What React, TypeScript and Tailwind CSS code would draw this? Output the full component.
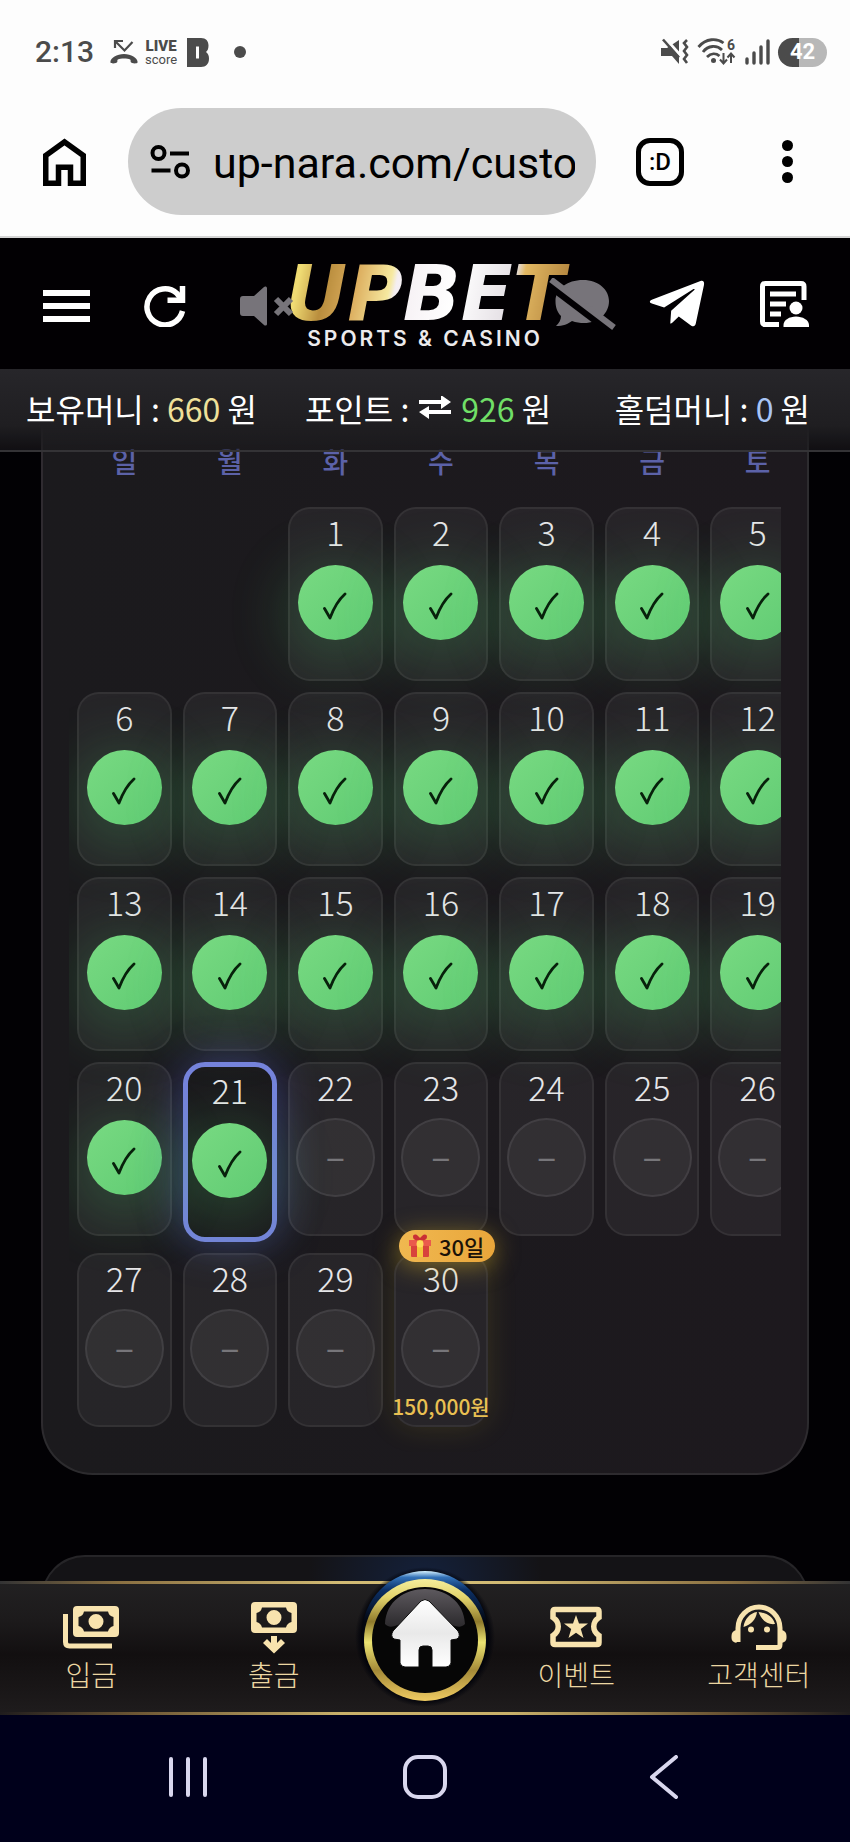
import React from 'react';
import { FaTelegramPlane } from 'react-icons/fa';

const WEEKDAYS = ['일', '월', '화', '수', '목', '금', '토'];
const DAYS = Array.from({ length: 30 }, (_, i) => i + 1);
const TODAY = 21;
const FIRST_DAY_OFFSET = 2;

const REWARDS: Record<number, { label: string; amount: string }> = {
  30: { label: '30일', amount: '150,000원' },
};

const StatusBar: React.FC = () => (
  <div className="h-[108px] flex items-center justify-between pl-[35px] pr-[23px] pb-1 text-[#4b4b4b] font-['Roboto',sans-serif]">
    <div className="flex items-center">
      <span className="text-[30px] leading-8 font-medium">2:13</span>
      <svg className="ml-4 w-7 h-7" viewBox="0 0 28 28" fill="none" stroke="currentColor" strokeWidth="2.2">
        <path d="M5 10V3h8M5.500 3.500l9 9L22.500 4" />
        <path d="M0.500 24.500c-.8-4 6-8.500 13.500-8.500s14.300 4.500 13.500 8.500c-.3 1.500-6.500 1-6.800-.5-.2-1 .2-2-.6-2.500-2.500-1.200-9.700-1.200-12.200 0-.8.500-.4 1.500-.6 2.500-.3 1.500-6.500 2-6.800.5z" fill="currentColor" stroke="none" />
      </svg>
      <span className="ml-[7px] w-8 flex flex-col items-center">
        <span className="text-[15px] leading-4 font-black">LIVE</span>
        <span className="text-[13px] leading-3">score</span>
      </span>
      <svg className="ml-[10px] w-[22px] h-[29px]" viewBox="0 0 22 29" fill="currentColor">
        <path fillRule="evenodd" d="M0 0h14c5 0 7.500 3 7.500 7.500 0 3-.8 5.200-2.500 6.500 2 1.300 3 3.600 3 6.500 0 5.500-3 8.500-8 8.500H0zM9 8.500v12h3v-12z" />
      </svg>
      <span className="ml-[25px] w-3 h-3 rounded-full bg-current" />
    </div>
    <div className="flex items-center gap-2">
      <svg className="w-7 h-7" viewBox="0 0 28 28" fill="currentColor">
        <path d="M0 10h6l12-8v24l-7-8H0z" />
        <path d="M4 0l16 18" stroke="#fdfdfd" strokeWidth="3" />
        <path d="M2 1.500l16 18" stroke="currentColor" strokeWidth="2.600" />
        <path d="M26 2l-3 3 3 4-3 4 3 4-3 4 3 4" fill="none" stroke="currentColor" strokeWidth="2.600" />
      </svg>
      <svg className="w-10 h-7" viewBox="0 0 40 28" fill="none" stroke="currentColor" strokeWidth="2.800">
        <path d="M1.500 9C9 0 20 0 26.500 5M6 14C11 7 20 7 25 12M10 19c4-4 9-4 12.500-1" />
        <circle cx="16.500" cy="22.500" r="2.500" fill="currentColor" stroke="none" />
        <path d="M26.500 15v10M23 21.500l3.500 4 3.500-4M34 25V16M30.500 19.500l3.500-4 3.500 4" strokeWidth="2" />
        <text x="30" y="12" fontSize="14" fontWeight="700" fill="currentColor" stroke="none">6</text>
      </svg>
      <svg className="w-[25px] h-7" viewBox="0 0 25 28" stroke="currentColor" strokeWidth="3.400" strokeLinecap="round">
        <path d="M2 25v-4M9 25V15M16 25V9M23 25V3" />
      </svg>
      <span className="w-[49px] h-[29px] rounded-full bg-linear-to-r from-[#4b4b4b] from-43% to-[#b8b8b8] to-43% flex items-center justify-center text-[22px] leading-none font-bold text-white">
        42
      </span>
    </div>
  </div>
);

const BrowserBar: React.FC = () => (
  <div className="h-[130px] flex items-start pl-[43px] pr-[57px] border-b-2 border-[#d5d5d5]">
    <button aria-label="홈" className="h-[107px] flex items-center">
      <svg className="w-[43px] h-[48px]" viewBox="0 0 43 48" fill="none" stroke="#000" strokeWidth="5.500">
        <path d="M2.750 17.500L21.500 4l18.750 13.500v27.750H27.500v-16h-12v16H2.750z" />
      </svg>
    </button>
    <div className="ml-[42px] flex-1 min-w-0 h-[107px] rounded-full bg-[#cdcdcd] flex items-center pl-[22px] pr-[21px]">
      <svg className="w-[41px] h-[34px] shrink-0" viewBox="0 0 41 34" fill="none" stroke="#000" strokeWidth="4">
        <circle cx="8.500" cy="8" r="6" />
        <circle cx="32" cy="25.500" r="6" />
        <path d="M20 8.500h19M1.500 25.500h19" />
      </svg>
      <input
        aria-label="주소"
        readOnly
        value="up-nara.com/custo"
        className="ml-[22px] pt-0.5 flex-1 min-w-0 bg-transparent text-[43px] leading-[52px] text-black outline-none font-['Roboto',sans-serif]"
      />
    </div>
    <button aria-label="탭" className="ml-10 h-[107px] flex items-center">
      <span className="w-12 h-12 rounded-[14px] border-[5px] border-black flex items-center justify-center text-[24px] leading-none font-medium font-['Roboto',sans-serif]">
        :D
      </span>
    </button>
    <button aria-label="메뉴" className="ml-[98px] h-[107px] flex flex-col justify-center gap-[5px]">
      <span className="w-[11px] h-[11px] rounded-full bg-black" />
      <span className="w-[11px] h-[11px] rounded-full bg-black" />
      <span className="w-[11px] h-[11px] rounded-full bg-black" />
    </button>
  </div>
);

const Logo: React.FC = () => (
  <a href="#" className="absolute left-1/2 top-[25px] -translate-x-1/2 flex flex-col items-center">
    <span className="px-2 text-[76px] leading-[62px] font-bold italic font-['DejaVu_Sans',sans-serif] text-transparent bg-clip-text bg-[linear-gradient(102deg,#e9d35c_0%,#f0dc74_8%,#b98d3d_17%,#dcae5f_27%,#f6e9a0_38%,#f4eef2_40%,#ffffff_60%,#e4dfe4_78%,#e2b862_81%,#a87836_100%)]">
      UPBET
    </span>
    <span className="mt-0.5 text-[21px] leading-6 font-semibold tracking-[3px] text-[#eceaec] whitespace-nowrap font-['Inter',sans-serif]">
      SPORTS &amp; CASINO
    </span>
  </a>
);

const SiteHeader: React.FC = () => (
  <header className="relative h-[131px] bg-[#020003] flex items-center justify-between pl-[43px] pr-[41px] text-white">
    <Logo />
    <div className="relative flex items-center gap-[54px] pt-1">
      <button aria-label="메뉴 열기">
        <svg className="w-[47px] h-[32px]" viewBox="0 0 47 32" fill="currentColor">
          <path d="M0 0h47v6H0zM0 13h47v6H0zM0 26h47v6H0z" />
        </svg>
      </button>
      <button aria-label="새로고침">
        <svg className="w-[42px] h-[42px]" viewBox="0 0 42 42" fill="none" stroke="currentColor" strokeWidth="5.500">
          <path d="M38.500 26A18 18 0 1 1 33 8.500l5 6.500" />
          <path d="M38.500 1v14.200H23.500" />
        </svg>
      </button>
      <button aria-label="소리 끄기" className="text-[#77747a]">
        <svg className="w-[54px] h-[40px]" viewBox="0 0 54 40" fill="currentColor">
          <path d="M3 10h11L24 1c1-1 3-.6 3 1v36c0 1.600-2 2-3 1l-10-9H3c-2 0-3-1-3-3V13c0-2 1-3 3-3z" />
          <path d="M36 13l15 15M51 13L36 28" stroke="currentColor" strokeWidth="6" />
        </svg>
      </button>
    </div>
    <div className="relative flex items-center gap-[30px]">
      <button aria-label="채팅 끄기" className="text-[#77747a]">
        <svg className="w-[67px] h-[52px]" viewBox="0 0 67 52" fill="currentColor">
          <path d="M34 2C50 2 60 12 60 23c0 12-10 22-25 22-4 0-8-.5-12-2-4 3-9 5-16 5 3-3 5-6 5-10-4-4-5.500-9-5.500-15C6.500 11 18 2 34 2z" />
          <path d="M0 6l62 47" stroke="#020003" strokeWidth="9" />
          <path d="M2 1.500l63 48" stroke="currentColor" strokeWidth="6" />
        </svg>
      </button>
      <button aria-label="텔레그램" className="mr-[22px]">
        <FaTelegramPlane className="w-[62px] h-[62px]" />
      </button>
      <button aria-label="게시판">
        <svg className="w-[49px] h-[46px]" viewBox="0 0 49 46" fill="none" stroke="currentColor" strokeWidth="5">
          <path d="M44 19V5.500q0-3-3-3H5.500q-3 0-3 3v35q0 3 3 3H19" />
          <path d="M10 13h26M10 23h16M10 33h11" />
          <circle cx="36" cy="27" r="6.500" fill="currentColor" stroke="none" />
          <path d="M23.500 46v-2c0-5 6-8.500 12.500-8.500S49 39 49 44v2z" fill="currentColor" stroke="none" />
        </svg>
      </button>
    </div>
  </header>
);

const BalanceBar: React.FC = () => (
  <div className="relative z-10 h-[83px] flex items-center pl-[26px] pr-[40px] pb-1 text-[32px] leading-10 text-white whitespace-nowrap border-b-2 border-[#38373a]/80 bg-linear-to-b from-[#27262a] via-[#1f1e21] via-70% to-[#1a191c]/60">
    <span>보유머니 : <span className="text-[#efe09a]">660</span> 원</span>
    <span className="ml-12 flex items-center gap-2.5">
      포인트 :
      <svg className="w-8 h-6" viewBox="0 0 32 24" fill="currentColor">
        <path d="M0 4h22V-1l10 7-10 7V8H0zM32 14v4H10v5L0 16l10-6v4z" />
      </svg>
      <span><span className="text-[#70df67]">926</span> 원</span>
    </span>
    <span className="ml-auto">홀덤머니 : <span className="text-[#a8c4f5]">0</span> 원</span>
  </div>
);

const GiftIcon: React.FC = () => (
  <svg className="w-[22px] h-[24px]" viewBox="0 0 22 24">
    <path d="M2 9h18v13q0 1-1 1H3q-1 0-1-1z" fill="#d8433c" />
    <path d="M0 6h22v6H0z" fill="#ea5a4c" />
    <path d="M8 6h6v17H8z" fill="#f5c63c" />
    <path d="M11 6C8 7 4 6 4 3s3-3 5-1l2 2 2-2c2-2 5-2 5 1s-4 4-7 3z" fill="#c92f35" />
    <circle cx="11" cy="10" r="3.500" fill="#ffd95a" />
  </svg>
);

const DayCell: React.FC<{ day: number }> = ({ day }) => {
  const checked = day <= TODAY;
  const reward = REWARDS[day];
  return (
    <div
      className={`relative flex flex-col items-center pt-2 pb-[5px] rounded-[22px] ${
        day === TODAY
          ? 'border-[5px] border-[#7583dc] shadow-[0_0_44px_rgba(99,110,240,0.4)]'
          : 'border-2 border-white/6 bg-white/5'
      } ${reward ? 'shadow-[0_0_30px_rgba(200,180,40,0.16)]' : ''}`}
    >
      {reward && (
        <span className="absolute -top-[25px] left-[3px] w-24 h-8 rounded-full bg-linear-to-r from-[#f0b850] to-[#e9a63a] shadow-[0_4px_24px_rgba(220,180,40,0.5)] flex items-center justify-center gap-2 text-[22px] leading-8 font-medium text-[#1a1208] whitespace-nowrap">
          <GiftIcon />
          {reward.label}
        </span>
      )}
      <span className="h-[42px] text-[34px] leading-[30px] font-light text-[#e6e6e8]">{day}</span>
      {checked ? (
        <span className="shrink-0 mt-1.5 mb-0.5 w-[75px] h-[75px] rounded-full bg-linear-to-br from-[#78da82] to-[#60cb73] shadow-[0_12px_60px_12px_rgba(80,205,110,0.24)] flex items-center justify-center">
          <svg className="w-6 h-7 mt-[7px]" viewBox="0 0 24 28" fill="none" stroke="#08210c" strokeWidth="2.800" strokeLinecap="round" strokeLinejoin="round">
            <path d="M1.500 16.500L7 26Q13 10 22 2" />
          </svg>
        </span>
      ) : (
        <span className="shrink-0 mt-1 w-[79px] h-[79px] pb-2 rounded-full border-2 border-white/8 bg-white/5 flex items-center justify-center text-[36px] leading-none text-[#77767a]">
          –
        </span>
      )}
      <span className="mt-[5px] h-[27px] text-[21px] leading-[27px] font-medium text-[#e9c052] whitespace-nowrap">
        {reward?.amount}
      </span>
    </div>
  );
};

const Calendar: React.FC = () => (
  <section className="-mt-8 mx-[41px] px-[26px] pb-[21px] rounded-b-[52px] border-2 border-t-0 border-white/8 bg-linear-to-r from-[#1b1a1d] to-[#1d191e]">
    <div className="overflow-hidden px-2 pb-[25px]">
      <div className="w-[728px] grid grid-cols-7 gap-x-[11px] pt-5 pb-[25px] text-center text-[28px] leading-[42px] font-medium text-[#5c62a8]">
        {WEEKDAYS.map((d) => (
          <span key={d}>{d}</span>
        ))}
      </div>
      <div className="w-[728px] grid grid-cols-7 items-start gap-[11px]">
        {Array.from({ length: FIRST_DAY_OFFSET }, (_, i) => (
          <span key={`blank-${i}`} />
        ))}
        {DAYS.map((day) => (
          <DayCell key={day} day={day} />
        ))}
      </div>
    </div>
  </section>
);

const NavItem: React.FC<{ label: string; children: React.ReactNode }> = ({ label, children }) => (
  <a href="#" className="flex-1 flex flex-col items-center pt-[18px] text-[#f8e3ae]">
    <svg className="w-[60px] h-[54px]" viewBox="0 0 60 54">{children}</svg>
    <span className="text-[28px] leading-9 font-light text-[#ecd7a2]">{label}</span>
  </a>
);

const Banknote: React.FC = () => (
  <path
    fill="currentColor"
    fillRule="evenodd"
    d="M4 0h38q4 0 4 4v23q0 4-4 4H4q-4 0-4-4V4q0-4 4-4zM11 5.500Q10 10 5.500 11v9Q10 21 11 25.500h24Q36 21 40.500 20v-9Q36 10 35 5.500zM23 8a7.500 7.500 0 1 1 0 15 7.500 7.500 0 0 1 0-15z"
  />
);

const HomeBadge: React.FC = () => (
  <svg className="absolute -top-[22px] -left-[10px] w-[140px] h-[150px]" viewBox="0 0 140 150">
    <defs>
      <linearGradient id="ring" x1="0" y1="0" x2="0" y2="1">
        <stop offset="0" stopColor="#f5ee9c" />
        <stop offset="0.15" stopColor="#e3d46c" />
        <stop offset="0.35" stopColor="#8f7a2c" />
        <stop offset="0.52" stopColor="#ebe372" />
        <stop offset="0.75" stopColor="#a48a38" />
        <stop offset="1" stopColor="#efcb62" />
      </linearGradient>
      <linearGradient id="cap" x1="0" y1="0" x2="0" y2="1">
        <stop offset="0" stopColor="#d6f2ff" />
        <stop offset="0.05" stopColor="#3372b8" />
        <stop offset="0.15" stopColor="#0c3066" />
        <stop offset="0.4" stopColor="#03060f" />
      </linearGradient>
      <linearGradient id="gloss" x1="0" y1="0" x2="0" y2="1">
        <stop offset="0" stopColor="#5d595e" />
        <stop offset="1" stopColor="#2c2a2d" />
      </linearGradient>
      <linearGradient id="house" x1="0" y1="0" x2="0" y2="1">
        <stop offset="0" stopColor="#ffffff" />
        <stop offset="0.5" stopColor="#e9e9e9" />
        <stop offset="1" stopColor="#ffffff" />
      </linearGradient>
      <radialGradient id="halo">
        <stop offset="0.9" stopColor="#02030a" />
        <stop offset="1" stopColor="#02030a" stopOpacity="0" />
      </radialGradient>
    </defs>
    <circle cx="70" cy="75" r="70" fill="url(#halo)" />
    <circle cx="70" cy="72" r="63" fill="url(#cap)" />
    <circle cx="70" cy="78" r="61" fill="url(#ring)" />
    <circle cx="70" cy="78" r="53" fill="#060606" />
    <path d="M30 62C31 39 50 27 70 27s39 12 40 35c-6 6-12 0-20-1-12-2-28-2-40 0-8 1-14 7-20 1z" fill="url(#gloss)" />
    <path
      d="M66 39q4-3 8 0l29 30q3 5-1 8l-6 1v23q-1 4-5 4H77V88q0-4-4-4h-5q-4 0-4 4v17H50q-4 0-5-4V78l-6-1q-4-3-1-8z"
      fill="url(#house)"
      stroke="#0b0b0b"
      strokeWidth="1"
    />
  </svg>
);

const BottomNav: React.FC = () => (
  <nav className="relative bg-[linear-gradient(180deg,#222122_0%,#1c1a1b_30%,#120f10_55%,#1f1c1d_100%)]">
    <div className="h-[3px] bg-[linear-gradient(90deg,#333334_0%,#8a7042_14%,#d2bb74_40%,#d2bb74_60%,#8a7042_86%,#333334_100%)]" />
    <div className="h-[128px] flex">
      <NavItem label="입금">
        <g transform="translate(12 4)"><Banknote /></g>
        <path d="M4.500 12v28q0 4 4 4H51" fill="none" stroke="currentColor" strokeWidth="5" />
      </NavItem>
      <NavItem label="출금">
        <g transform="translate(7 0)"><Banknote /></g>
        <path d="M27 34h6v7l4-4 4 4-11 10.500L19 41l4-4 4 4z" fill="currentColor" />
      </NavItem>
      <a href="#" aria-label="홈" className="relative w-[120px]">
        <HomeBadge />
      </a>
      <NavItem label="이벤트">
        <path
          d="M9 7.500h42Q53 7.500 53 9.500V15.500C46 20 46 29 53 33.500V40.500q0 2-2 2H9q-2 0-2-2V33.500C14 29 14 20 7 15.500V9.500q0-2 2-2z"
          fill="none"
          stroke="currentColor"
          strokeWidth="5.500"
        />
        <path d="M30 13l3 8.500h9L34.800 27l2.700 9-7.500-5.300L22.500 36l2.700-9L18 21.500h9z" fill="currentColor" />
      </NavItem>
      <NavItem label="고객센터">
        <path d="M9 40V26a21 21 0 0 1 42 0v16.500q0 3-3 3H27" fill="none" stroke="currentColor" strokeWidth="5" />
        <path d="M7.500 28q-5 1-5 6v2q0 4 5 5zM52.500 28q5 1 5 6v2q0 4-5 5z" fill="currentColor" />
        <path d="M14.500 25C15.500 17 21 11 28 10 27 17.500 22 22.500 14.500 25zM29.500 10C38 11 44 15 46 22 39 23 32.500 18.500 29.500 10z" fill="currentColor" />
        <circle cx="22" cy="27.500" r="3" fill="currentColor" />
        <circle cx="38" cy="27.500" r="3" fill="currentColor" />
      </NavItem>
    </div>
    <div className="h-[3px] bg-[linear-gradient(90deg,#1f1c1d_0%,#6d5634_16%,#c9b06a_40%,#c9b06a_60%,#6d5634_84%,#1f1c1d_100%)]" />
  </nav>
);

const SystemNav: React.FC = () => (
  <div className="h-[127px] bg-[#00001b] grid grid-cols-3 items-center justify-items-center px-[69px] text-[#d9d7ee]">
    <button aria-label="최근 앱">
      <svg className="w-11 h-11 mb-1" viewBox="0 0 44 44" stroke="currentColor" strokeWidth="4" strokeLinecap="round">
        <path d="M5 4v36M22 4v36M39 4v36" />
      </svg>
    </button>
    <button aria-label="홈 화면">
      <svg className="w-11 h-11 mb-1" viewBox="0 0 44 44" fill="none" stroke="currentColor" strokeWidth="4">
        <rect x="2" y="2" width="40" height="40" rx="13" />
      </svg>
    </button>
    <button aria-label="뒤로">
      <svg className="w-11 h-11 mb-1" viewBox="0 0 44 44" fill="none" stroke="currentColor" strokeWidth="4" strokeLinecap="round" strokeLinejoin="round">
        <path d="M36 2L12 22l24 20" />
      </svg>
    </button>
  </div>
);

export default function App() {
  return (
    <div className="bg-black overflow-hidden font-['Noto_Sans_CJK_KR',sans-serif]">
      <div className="bg-[#fdfdfd] text-black">
        <StatusBar />
        <BrowserBar />
      </div>
      <SiteHeader />
      <BalanceBar />
      <main className="bg-[#020104]">
        <Calendar />
        <div className="mt-20 mx-[41px] h-[26px] overflow-hidden">
          <section className="h-28 rounded-[44px] border-2 border-white/8 bg-[radial-gradient(circle_at_50%_25%,#14213c_0%,#141316_30%)]" />
        </div>
      </main>
      <BottomNav />
      <SystemNav />
    </div>
  );
}
